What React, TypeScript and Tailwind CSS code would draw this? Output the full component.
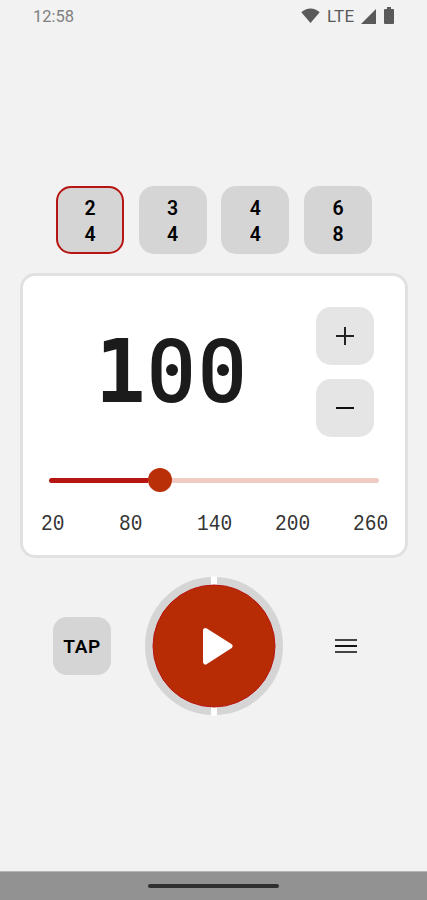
import React from "react";

const signatures = [
  { top: "2", bottom: "4", active: true },
  { top: "3", bottom: "4", active: false },
  { top: "4", bottom: "4", active: false },
  { top: "6", bottom: "8", active: false },
];

const marks = ["20", "80", "140", "200", "260"];

function StatusBar() {
  return (
    <header className="flex h-8 items-center justify-between pl-[33px] pr-[33px] font-[Roboto,sans-serif] text-[#5a5a5a]">
      <span className="pt-px text-[16.5px] leading-8 text-[#808080]">12:58</span>
      <div className="flex items-center">
        <svg className="mb-px h-[15px] w-[19px]" viewBox="0 0 19 15" fill="currentColor">
          <path d="M0.3 4.3C5.5-.9 13.5-.9 18.7 4.3L9.5 15Z" />
        </svg>
        <span className="ml-[7px] w-[28px] text-[17px] leading-8 tracking-[0.2px]">LTE</span>
        <svg className="ml-[6px] h-[15px] w-[15px]" viewBox="0 0 15 15" fill="currentColor">
          <path d="M15 0V15H0Z" />
        </svg>
        <svg className="mb-px ml-[8px] h-[17px] w-[10px]" viewBox="0 0 10 17" fill="currentColor">
          <path d="M3 0h4v2h2a1 1 0 0 1 1 1v13a1 1 0 0 1-1 1H1a1 1 0 0 1-1-1V3a1 1 0 0 1 1-1h2Z" />
        </svg>
      </div>
    </header>
  );
}

function DottedZero() {
  return (
    <span className="relative flex w-[51px] justify-center font-[Roboto,sans-serif] text-[89px] font-medium">
      <span className="inline-block scale-x-[0.95]">0</span>
      <span className="absolute left-1/2 top-[calc(50%-2px)] size-[12px] -translate-x-1/2 -translate-y-1/2 rounded-full bg-[#1b1b1b]" />
    </span>
  );
}

export default function App() {
  return (
    <main className="flex h-[900px] w-[427px] flex-col overflow-hidden bg-[#f2f2f2] text-[#1b1b1b]">
      <StatusBar />

      <section className="mt-[154px] flex justify-between pl-[56px] pr-[55px]">
        {signatures.map((s, i) => (
          <button
            key={i}
            className={
              "flex h-[68px] w-[68px] flex-col items-center justify-center rounded-[15px] bg-[#d5d5d5] pt-[4px] font-[Roboto,sans-serif] text-[19.5px] font-semibold leading-[26px] text-black " +
              (s.active ? "border-2 border-[#b71512]" : "")
            }
          >
            <span>{s.top}</span>
            <span>{s.bottom}</span>
          </button>
        ))}
      </section>

      <section className="ml-[20px] mt-[19px] flex h-[285px] w-[388px] flex-col rounded-[15px] border-[3px] border-[#e1e1e1] bg-white">
        <div className="flex pl-[72px] pt-[31px]">
          <div className="flex h-[130px] w-[153px] items-center leading-[130px]">
            <span className="flex w-[51px] justify-center font-['DejaVu_Sans_Mono',monospace] text-[88px] font-bold">
              <span className="inline-block scale-x-[0.95]">1</span>
            </span>
            <DottedZero />
            <DottedZero />
          </div>
          <div className="ml-[68px] flex flex-col gap-[14px]">
            <button className="flex size-[58px] items-center justify-center rounded-[15px] bg-[#e5e5e5]">
              <svg className="size-[18px]" viewBox="0 0 18 18" stroke="#222" strokeWidth="2">
                <path d="M9 0V18M0 9H18" />
              </svg>
            </button>
            <button className="flex size-[58px] items-center justify-center rounded-[15px] bg-[#e5e5e5]">
              <svg className="size-[18px]" viewBox="0 0 18 18" stroke="#111" strokeWidth="2">
                <path d="M0 9H18" />
              </svg>
            </button>
          </div>
        </div>
        <div className="ml-[26px] mt-[31px] flex h-[24px] w-[330px] items-center">
          <div className="h-[5px] w-[98.5px] rounded-l-full bg-[#b71512]" />
          <div className="size-[24px] rounded-full bg-[#b92f08]" />
          <div className="h-[5px] flex-1 rounded-r-full bg-[#f0cbc4]" />
        </div>
        <div className="ml-[18px] mt-[20px] grid grid-cols-[78px_78px_78px_78px_38px] font-['Liberation_Mono',monospace] text-[19.5px] leading-[24px] text-[#333]">
          {marks.map((m) => (
            <span key={m} className="inline-block scale-y-[1.14]">
              {m}
            </span>
          ))}
        </div>
      </section>

      <section className="mt-[18px] flex items-center">
        <button className="ml-[53px] flex size-[58px] items-center justify-center rounded-[14px] bg-[#d5d5d5] pt-[3px] font-[Roboto,sans-serif] text-[19px] font-semibold tracking-[0.6px] text-black">
          TAP
        </button>
        <button className="ml-[33px]">
          <svg className="h-[140px] w-[140px]" viewBox="0 0 140 140">
            <circle cx="70" cy="70" r="65" fill="none" stroke="#d5d5d5" strokeWidth="8" />
            <path d="M67 0.5h6v139h-6z" fill="#fff" />
            <circle cx="70" cy="70" r="61" fill="#b72c05" stroke="#b71512" strokeWidth="1" />
            <path
              d="M61.5 54.5L86 70.2L61.5 86Z"
              fill="#fff"
              stroke="#fff"
              strokeWidth="5"
              strokeLinejoin="round"
            />
          </svg>
        </button>
        <button className="ml-[51px] flex w-[22px] flex-col gap-[4px]">
          <span className="h-[2px] bg-[#444]" />
          <span className="h-[2px] bg-[#151515]" />
          <span className="h-[2px] bg-[#444]" />
        </button>
      </section>

      <footer className="mt-auto flex h-[29px] justify-center border-t border-[#b5b5b5] bg-[#929292] pt-[12px]">
        <div className="h-[4px] w-[131px] rounded-full bg-[#303030]" />
      </footer>
    </main>
  );
}
